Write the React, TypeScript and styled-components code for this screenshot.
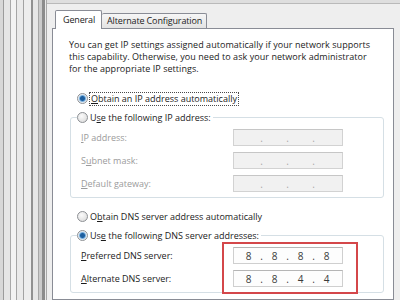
import React from 'react';
import styled, { createGlobalStyle } from 'styled-components';

const GlobalStyle = createGlobalStyle`
    html, body {
        margin: 0;
        padding: 0;
        width: 400px;
        height: 300px;
        overflow: hidden;
        background: #dedede;
    }
    body {
        font-family: 'Open Sans', 'Liberation Sans', sans-serif;
        font-size: 9px;
        color: #1b1b1b;
    }
`;

const Screen = styled.div`
    display: flex;
    width: 400px;
    height: 300px;
    overflow: hidden;
`;

// stacked window borders behind the dialog
const Stripes = styled.div`
    flex: none;
    width: 47px;
    height: 100%;
    background: linear-gradient(
        to right,
        #d8d8d8 0 3px,
        #9c9c9c 3px 4px,
        #e6e6e6 4px 10px,
        #a9a9a9 10px 11px,
        #f3f3f3 11px 16px,
        #a6a6a6 16px 17px,
        #eaeaea 17px 23px,
        #a2a2a2 23px 24px,
        #ededed 24px 31px,
        #909090 31px 33px,
        #e6e6e6 33px 38px,
        #a6a6a6 38px 39px,
        #cbcbcb 39px 42px,
        #8c8c8c 42px 45px,
        #e9e9e9 45px 46px,
        #a8a8a8 46px 47px
    );
`;

const Dialog = styled.div`
    flex: 1;
    margin-top: 3px;
    border-top: 1px solid #b9b9b9;
    background: #eeeeee;
    padding: 6px 6px 0 5px;
    display: flex;
    flex-direction: column;
`;

const TabBar = styled.div`
    display: flex;
    align-items: flex-end;
    height: 18px;
    padding-left: 3px;
`;

const Tab = styled.div<{ $active?: boolean }>`
    position: relative;
    z-index: ${(p) => (p.$active ? 1 : 0)};
    box-sizing: border-box;
    height: ${(p) => (p.$active ? '19px' : '15px')};
    margin-bottom: ${(p) => (p.$active ? '-1px' : '0')};
    padding: ${(p) => (p.$active ? '3px 6px 0 7px' : '1px 4px 0 5px')};
    border: 1px solid #898c95;
    border-bottom: none;
    border-left: ${(p) => (p.$active ? '1px solid #898c95' : 'none')};
    border-radius: 2px 2px 0 0;
    background: ${(p) => (p.$active ? '#ffffff' : 'linear-gradient(#f6f6f6, #e3e3e3)')};
    font-size: 9px;
    letter-spacing: -0.15px;
    line-height: 12px;
    white-space: nowrap;
`;

const Panel = styled.div`
    flex: 1;
    background: #ffffff;
    border: 1px solid #898c95;
    padding: 10px 9px 0 16px;
`;

const Intro = styled.p`
    margin: 0;
    font-size: 9px;
    line-height: 12px;
    letter-spacing: 0.05px;
`;

const RadioRow = styled.div<{ $gap: number }>`
    display: flex;
    align-items: center;
    height: 13px;
    margin: ${(p) => p.$gap}px 0 0 8px;
    line-height: 12px;
`;

const Radio = styled.span<{ $checked?: boolean }>`
    flex: none;
    box-sizing: border-box;
    width: 11px;
    height: 11px;
    margin-right: 2px;
    border-radius: 50%;
    border: 1px solid #8d9094;
    background: ${(p) =>
        p.$checked
            ? 'radial-gradient(circle, #1f5f9e 0 2px, #4d92cf 2.6px, #a9cbe8 3.4px, #eef2f5 4.2px)'
            : 'radial-gradient(circle at 40% 35%, #fbfbfb, #d6d6d6)'};
`;

const Focused = styled.span`
    border: 1px dotted #4a4a4a;
    padding: 0 1px;
    margin-left: -1px;
`;

const Key = styled.span`
    text-decoration: underline;
    text-underline-offset: 1px;
`;

const Group = styled.fieldset`
    position: relative;
    margin: 6px 0 0 1px;
    padding: 5px 6px 5px 6px;
    border: 1px solid #d5dfe5;
    border-radius: 3px;
    min-width: 0;
`;

const Legend = styled.legend`
    display: flex;
    align-items: center;
    height: 13px;
    padding: 0 2px 0 0;
    line-height: 12px;
`;

const FieldGrid = styled.div`
    position: relative;
    display: grid;
    grid-template-columns: 156px 110px;
    row-gap: 6px;
    align-items: center;
`;

const FieldLabel = styled.span<{ $disabled?: boolean }>`
    padding-left: 4px;
    color: ${(p) => (p.$disabled ? '#9b9b9b' : '#1b1b1b')};
`;

const IpBox = styled.div<{ $disabled?: boolean }>`
    box-sizing: border-box;
    display: flex;
    align-items: center;
    width: 110px;
    height: 17px;
    padding-left: 4px;
    border: 1px solid ${(p) => (p.$disabled ? '#d2d2d2' : '#cfcfcf')};
    border-top-color: ${(p) => (p.$disabled ? '#c6c6c6' : '#b5b5b5')};
    background: ${(p) => (p.$disabled ? '#f1f1f1' : '#fdfdfd')};
    color: ${(p) => (p.$disabled ? '#a8a8a8' : '#3a3a3a')};
    font-size: 10px;
`;

const Octet = styled.span`
    width: 21px;
    text-align: center;
`;

const Dot = styled.span`
    width: 5px;
    text-align: center;
`;

// red annotation drawn over the DNS boxes
const Highlight = styled.div`
    position: absolute;
    left: 145px;
    top: -5px;
    width: 136px;
    height: 52px;
    box-sizing: border-box;
    border: 2px solid #d4474a;
    pointer-events: none;
`;

const IpField = ({ value, disabled }: { value?: string[]; disabled?: boolean }) => {
    const parts = value || ['', '', '', ''];
    return (
        <IpBox $disabled={disabled}>
            {parts.map((part, i) => (
                <React.Fragment key={i}>
                    <Octet>{part}</Octet>
                    {i < 3 && <Dot>.</Dot>}
                </React.Fragment>
            ))}
        </IpBox>
    );
};

const App: React.FC = () => {
    return (
        <>
            <GlobalStyle />
            <Screen>
                <Stripes />
                <Dialog>
                    <TabBar>
                        <Tab $active>General</Tab>
                        <Tab>Alternate Configuration</Tab>
                    </TabBar>
                    <Panel>
                        <Intro>
                            You can get IP settings assigned automatically if your network supports
                            <br />
                            this capability. Otherwise, you need to ask your network administrator
                            <br />
                            for the appropriate IP settings.
                        </Intro>

                        <RadioRow $gap={17}>
                            <Radio $checked />
                            <Focused>
                                <Key>O</Key>btain an IP address automatically
                            </Focused>
                        </RadioRow>

                        <Group>
                            <Legend>
                                <Radio />
                                <span>
                                    U<Key>s</Key>e the following IP address:
                                </span>
                            </Legend>
                            <FieldGrid>
                                <FieldLabel $disabled>
                                    <Key>I</Key>P address:
                                </FieldLabel>
                                <IpField disabled />
                                <FieldLabel $disabled>
                                    S<Key>u</Key>bnet mask:
                                </FieldLabel>
                                <IpField disabled />
                                <FieldLabel $disabled>
                                    <Key>D</Key>efault gateway:
                                </FieldLabel>
                                <IpField disabled />
                            </FieldGrid>
                        </Group>

                        <RadioRow $gap={12}>
                            <Radio />
                            <span>
                                O<Key>b</Key>tain DNS server address automatically
                            </span>
                        </RadioRow>

                        <Group>
                            <Legend>
                                <Radio $checked />
                                <span>
                                    Us<Key>e</Key> the following DNS server addresses:
                                </span>
                            </Legend>
                            <FieldGrid>
                                <FieldLabel>
                                    <Key>P</Key>referred DNS server:
                                </FieldLabel>
                                <IpField value={['8', '8', '8', '8']} />
                                <FieldLabel>
                                    <Key>A</Key>lternate DNS server:
                                </FieldLabel>
                                <IpField value={['8', '8', '4', '4']} />
                                <Highlight />
                            </FieldGrid>
                        </Group>
                    </Panel>
                </Dialog>
            </Screen>
        </>
    );
};

export default App;
